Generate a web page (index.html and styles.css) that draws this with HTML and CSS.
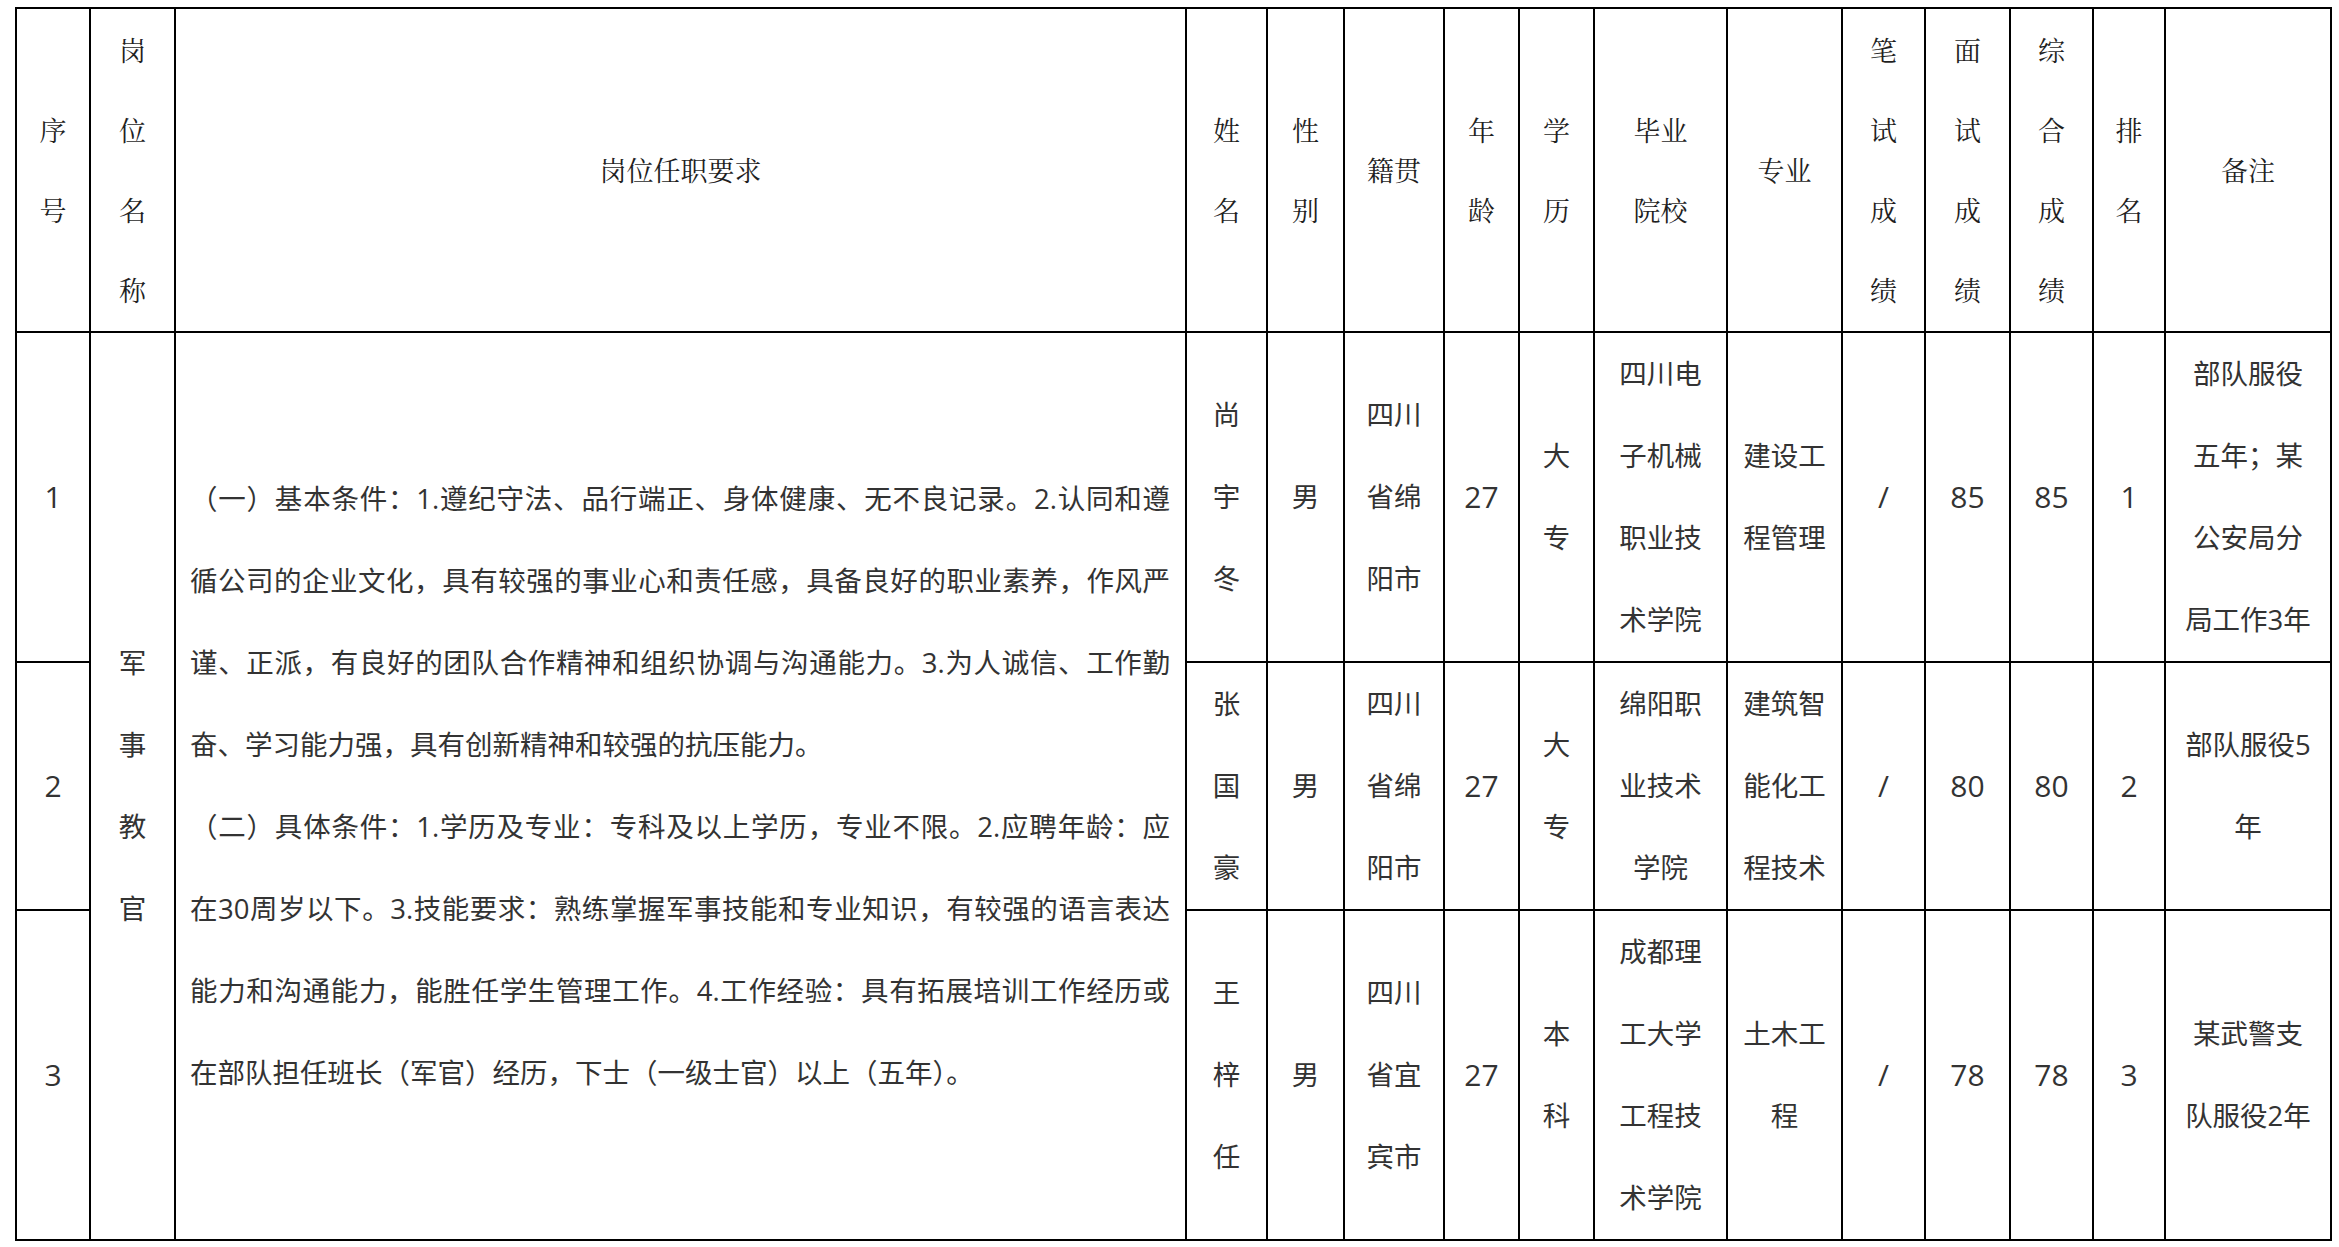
FILE: index.html
```html
<!DOCTYPE html>
<html lang="zh-CN">
<head>
<meta charset="utf-8">
<title>军事教官岗位拟聘人员</title>
<link rel="stylesheet" href="styles.css">
</head>
<body>
<div class="page">
<table class="roster">
<colgroup>
<col class="c-no"><col class="c-post"><col class="c-req"><col class="c-name"><col class="c-sex"><col class="c-origin"><col class="c-age"><col class="c-edu"><col class="c-school"><col class="c-major"><col class="c-written"><col class="c-interview"><col class="c-total"><col class="c-rank"><col class="c-note">
</colgroup>
<thead>
<tr class="r-head">
<th>序<br>号</th>
<th>岗<br>位<br>名<br>称</th>
<th>岗位任职要求</th>
<th>姓<br>名</th>
<th>性<br>别</th>
<th>籍贯</th>
<th>年<br>龄</th>
<th>学<br>历</th>
<th>毕业<br>院校</th>
<th>专业</th>
<th>笔<br>试<br>成<br>绩</th>
<th>面<br>试<br>成<br>绩</th>
<th>综<br>合<br>成<br>绩</th>
<th>排<br>名</th>
<th>备注</th>
</tr>
</thead>
<tbody>
<tr class="r-tall">
<td class="num">1</td>
<td rowspan="3">军<br>事<br>教<br>官</td>
<td rowspan="3" class="req">
<span class="ln">（一）基本条件：1.遵纪守法、品行端正、身体健康、无不良记录。2.认同和遵</span>
<span class="ln">循公司的企业文化，具有较强的事业心和责任感，具备良好的职业素养，作风严</span>
<span class="ln">谨、正派，有良好的团队合作精神和组织协调与沟通能力。3.为人诚信、工作勤</span>
<span class="ln end">奋、学习能力强，具有创新精神和较强的抗压能力。</span>
<span class="ln">（二）具体条件：1.学历及专业：专科及以上学历，专业不限。2.应聘年龄：应</span>
<span class="ln">在30周岁以下。3.技能要求：熟练掌握军事技能和专业知识，有较强的语言表达</span>
<span class="ln">能力和沟通能力，能胜任学生管理工作。4.工作经验：具有拓展培训工作经历或</span>
<span class="ln end">在部队担任班长（军官）经历，下士（一级士官）以上（五年）。</span>
</td>
<td>尚<br>宇<br>冬</td>
<td>男</td>
<td>四川<br>省绵<br>阳市</td>
<td class="num">27</td>
<td>大<br>专</td>
<td>四川电<br>子机械<br>职业技<br>术学院</td>
<td>建设工<br>程管理</td>
<td class="num">/</td>
<td class="num">85</td>
<td class="num">85</td>
<td class="num">1</td>
<td>部队服役<br>五年；某<br>公安局分<br>局工作3年</td>
</tr>
<tr class="r-mid">
<td class="num">2</td>
<td>张<br>国<br>豪</td>
<td>男</td>
<td>四川<br>省绵<br>阳市</td>
<td class="num">27</td>
<td>大<br>专</td>
<td>绵阳职<br>业技术<br>学院</td>
<td>建筑智<br>能化工<br>程技术</td>
<td class="num">/</td>
<td class="num">80</td>
<td class="num">80</td>
<td class="num">2</td>
<td>部队服役5<br>年</td>
</tr>
<tr class="r-tall">
<td class="num">3</td>
<td>王<br>梓<br>任</td>
<td>男</td>
<td>四川<br>省宜<br>宾市</td>
<td class="num">27</td>
<td>本<br>科</td>
<td>成都理<br>工大学<br>工程技<br>术学院</td>
<td>土木工<br>程</td>
<td class="num">/</td>
<td class="num">78</td>
<td class="num">78</td>
<td class="num">3</td>
<td>某武警支<br>队服役2年</td>
</tr>
</tbody>
</table>
</div>
</body>
</html>
```

FILE: styles.css
```css
* {
  box-sizing: border-box;
}

html,
body {
  margin: 0;
  padding: 0;
  background: #ffffff;
}

body {
  font-family: "Open Sans", "Noto Sans CJK SC", sans-serif;
  color: #333333;
}

.page {
  padding: 7px 0 0 15px;
}

.roster {
  border-collapse: collapse;
  table-layout: fixed;
  width: 2315px;
}

.c-no { width: 74px; }
.c-post { width: 85px; }
.c-req { width: 1011px; }
.c-name { width: 81px; }
.c-sex { width: 77px; }
.c-origin { width: 100px; }
.c-age { width: 75px; }
.c-edu { width: 75px; }
.c-school { width: 133px; }
.c-major { width: 115px; }
.c-written { width: 83px; }
.c-interview { width: 85px; }
.c-total { width: 83px; }
.c-rank { width: 72px; }
.c-note { width: 166px; }

.roster th,
.roster td {
  border: 2px solid #000000;
  padding: 0;
  text-align: center;
  vertical-align: middle;
  white-space: nowrap;
}

.roster th {
  font-family: "Noto Serif CJK SC", "Noto Sans CJK SC", serif;
  font-weight: normal;
  font-size: 27px;
  line-height: 80px;
  color: #1f1f1f;
}

.roster td {
  font-size: 27.5px;
  line-height: 82px;
}

.r-head { height: 324px; }
.r-tall { height: 330px; }
.r-mid { height: 248px; }

.roster td.req {
  text-align: left;
  white-space: normal;
  padding: 0 15px 0 14px;
}

.ln {
  display: block;
  text-align: justify;
  text-align-last: justify;
}

.ln.end {
  text-align-last: left;
}

.roster td.num {
  font-size: 30px;
}
```
